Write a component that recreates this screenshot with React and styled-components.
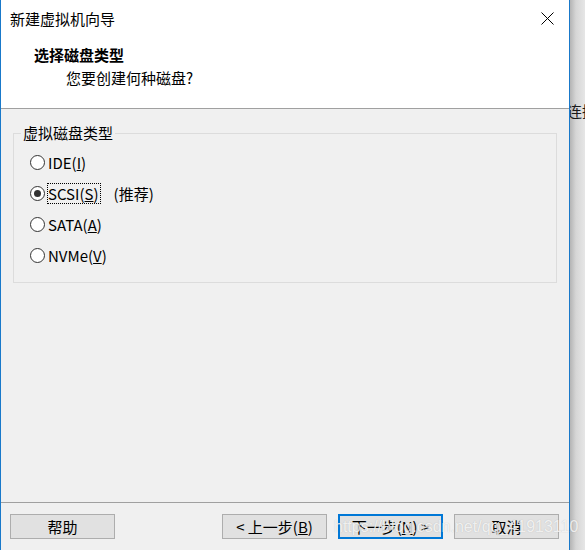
import styled, { createGlobalStyle } from "styled-components";

const GlobalStyle = createGlobalStyle`
  html, body {
    margin: 0;
    padding: 0;
    background: #ffffff;
  }
  body {
    font-family: "Noto Sans CJK SC", "Noto Sans", sans-serif;
    font-size: 15px;
    color: #000;
  }
`;

const Screen = styled.div`
  display: flex;
  width: 585px;
  height: 550px;
  overflow: hidden;
`;

const Dialog = styled.div`
  position: relative;
  width: 570px;
  height: 550px;
  box-sizing: border-box;
  border-left: 1px solid #1979ca;
  border-right: 1px solid #1979ca;
  display: flex;
  flex-direction: column;
  background: #f0f0f0;
`;

const TitleBar = styled.div`
  height: 37px;
  display: flex;
  align-items: center;
  justify-content: space-between;
  padding: 0 15px 0 9px;
  background: #fff;
  line-height: 20px;
`;

const CloseIcon = styled.svg`
  display: block;
  width: 13px;
  height: 13px;
`;

const Header = styled.div`
  height: 72px;
  background: #fff;
  border-bottom: 1px solid #a0a0a0;
  padding: 8px 0 0 33px;
  box-sizing: border-box;
`;

const Heading = styled.div`
  font-weight: 700;
  line-height: 20px;
`;

const SubHeading = styled.div`
  line-height: 20px;
  margin-top: 3px;
  padding-left: 32px;
`;

const Body = styled.div`
  flex: 1;
  padding: 14px 12px 0 12px;
`;

const Group = styled.fieldset`
  margin: 0;
  padding: 4px 0 11px 0;
  border: 1px solid #dcdcdc;
  min-inline-size: auto;
`;

const Legend = styled.legend`
  margin-left: 7px;
  padding: 0 2px;
  line-height: 20px;
`;

const OptionList = styled.div`
  padding-left: 16px;
`;

const Option = styled.label`
  display: flex;
  align-items: center;
  height: 31px;
  gap: 2px;
`;

const Radio = styled.span`
  width: 15px;
  height: 15px;
  box-sizing: border-box;
  border: 1px solid #333;
  border-radius: 50%;
  background: #fff;
  display: flex;
  align-items: center;
  justify-content: center;

  &::after {
    content: "";
    width: 7px;
    height: 7px;
    border-radius: 50%;
    background: ${(p) => (p.$checked ? "#333" : "transparent")};
  }
`;

const OptionText = styled.span`
  line-height: 19px;
  padding: 0 1px 0 0;
  border: 1px dotted ${(p) => (p.$focused ? "#000" : "transparent")};
`;

const Hint = styled.span`
  margin-left: 11px;
`;

const Footer = styled.div`
  height: 48px;
  box-sizing: border-box;
  border-top: 1px solid #a0a0a0;
  padding: 11px 10px 0 9px;
  display: flex;
  gap: 11px;
`;

const Spacer = styled.div`
  flex: 1;
`;

const Button = styled.button`
  width: 105px;
  height: 25px;
  box-sizing: border-box;
  background: #e1e1e1;
  border: ${(p) => (p.$primary ? "2px solid #0078d7" : "1px solid #adadad")};
  font-family: inherit;
  font-size: 15px;
  line-height: 20px;
  color: #000;
  padding: 0;
  display: flex;
  align-items: center;
  justify-content: center;
`;

const Watermark = styled.div`
  position: absolute;
  left: 333px;
  top: 516px;
  font-family: "Liberation Sans", Arial, sans-serif;
  font-size: 16px;
  line-height: 22px;
  color: rgba(255, 255, 255, 0.8);
  text-shadow: 0 0 1px rgba(110, 110, 110, 0.4);
  white-space: nowrap;
  pointer-events: none;
`;

const Backdrop = styled.div`
  flex: 1;
  background: linear-gradient(to right, #b4b4b4, #d6d6d6 40%, #e6e6e6);
  padding-top: 101px;
  overflow: hidden;
`;

const BackdropText = styled.div`
  margin-left: -3px;
  line-height: 20px;
  white-space: nowrap;
  color: #1a1a1a;
`;

const options = [
  { key: "ide", name: "IDE", mnemonic: "I" },
  { key: "scsi", name: "SCSI", mnemonic: "S", checked: true, hint: "(推荐)" },
  { key: "sata", name: "SATA", mnemonic: "A" },
  { key: "nvme", name: "NVMe", mnemonic: "V" },
];

export default function App() {
  return (
    <>
      <GlobalStyle />
      <Screen>
        <Dialog>
          <TitleBar>
            <span>新建虚拟机向导</span>
            <CloseIcon viewBox="0 0 13 13">
              <path d="M0.5 0.5 L12.5 12.5 M12.5 0.5 L0.5 12.5" stroke="#000" strokeWidth="1" fill="none" />
            </CloseIcon>
          </TitleBar>
          <Header>
            <Heading>选择磁盘类型</Heading>
            <SubHeading>您要创建何种磁盘?</SubHeading>
          </Header>
          <Body>
            <Group>
              <Legend>虚拟磁盘类型</Legend>
              <OptionList>
                {options.map((o) => (
                  <Option key={o.key}>
                    <Radio $checked={o.checked} />
                    <OptionText $focused={o.checked}>
                      {o.name}(<u>{o.mnemonic}</u>)
                    </OptionText>
                    {o.hint && <Hint>{o.hint}</Hint>}
                  </Option>
                ))}
              </OptionList>
            </Group>
          </Body>
          <Footer>
            <Button>帮助</Button>
            <Spacer />
            <Button>&lt; 上一步(<u>B</u>)</Button>
            <Button $primary>下一步(<u>N</u>) &gt;</Button>
            <Button>取消</Button>
          </Footer>
          <Watermark>https://blog.csdn.net/qq_41913110</Watermark>
        </Dialog>
        <Backdrop>
          <BackdropText>连接</BackdropText>
        </Backdrop>
      </Screen>
    </>
  );
}
